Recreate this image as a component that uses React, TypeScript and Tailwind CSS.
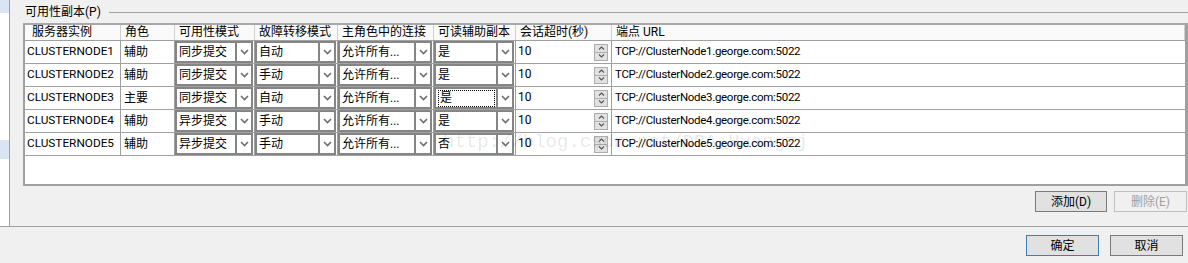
import React from "react";

const CJK = "font-['Roboto','Noto_Sans_CJK_SC',sans-serif]";

const ROWS = [
  { name: "CLUSTERNODE1", role: "辅助", mode: "同步提交", fail: "自动", readable: "是", url: "TCP://ClusterNode1.george.com:5022" },
  { name: "CLUSTERNODE2", role: "辅助", mode: "同步提交", fail: "手动", readable: "是", url: "TCP://ClusterNode2.george.com:5022" },
  { name: "CLUSTERNODE3", role: "主要", mode: "同步提交", fail: "自动", readable: "是", url: "TCP://ClusterNode3.george.com:5022", focus: true },
  { name: "CLUSTERNODE4", role: "辅助", mode: "异步提交", fail: "手动", readable: "是", url: "TCP://ClusterNode4.george.com:5022" },
  { name: "CLUSTERNODE5", role: "辅助", mode: "异步提交", fail: "手动", readable: "否", url: "TCP://ClusterNode5.george.com:5022" },
];

const HEADERS = ["服务器实例", "角色", "可用性模式", "故障转移模式", "主角色中的连接", "可读辅助副本", "会话超时(秒)", "端点 URL"];

const COLS = "grid grid-cols-[96px_54px_80px_83px_96px_82px_96px_1fr]";

function Chevron() {
  return (
    <svg width="9" height="6" viewBox="0 0 9 6">
      <path d="M1 1 L4.5 4.5 L8 1" fill="none" stroke="#6d6d6d" strokeWidth="1.6" />
    </svg>
  );
}

function Combo({ value, focus }: { value: string; focus?: boolean }) {
  return (
    <div className="flex h-full border-2 border-[#858585] bg-white">
      <div className="flex flex-1 items-center pl-[2px] min-w-0">
        <span className={focus ? "border border-dotted border-black pl-px pr-[42px] leading-[15px]" : "leading-[15px]"}>
          {value}
        </span>
      </div>
      <div className="flex w-[16px] items-center justify-center border-l-2 border-[#858585] bg-white">
        <Chevron />
      </div>
    </div>
  );
}

function Spinner() {
  return (
    <div className="flex h-[17px] w-[14px] flex-col border border-[#adadad] bg-[#e1e1e1]">
      <div className="flex flex-1 items-center justify-center border-b border-[#adadad]">
        <svg width="7" height="4" viewBox="0 0 7 4">
          <path d="M1 3.5 L3.5 1 L6 3.5" fill="none" stroke="#555" strokeWidth="1.1" />
        </svg>
      </div>
      <div className="flex flex-1 items-center justify-center">
        <svg width="7" height="4" viewBox="0 0 7 4">
          <path d="M1 0.5 L3.5 3 L6 0.5" fill="none" stroke="#555" strokeWidth="1.1" />
        </svg>
      </div>
    </div>
  );
}

function Btn({ label, disabled, primary, w }: { label: string; disabled?: boolean; primary?: boolean; w: string }) {
  return (
    <div
      className={`flex h-[21px] ${w} items-center justify-center border text-[12px] ${
        disabled
          ? "border-[#bfbfbf] text-[#a0a0a0]"
          : primary
          ? "border-[#3c7fb1] bg-[#e1e1e1] text-black"
          : "border-[#7a7a7a] bg-[#e1e1e1] text-black"
      }`}
    >
      {label}
    </div>
  );
}

export default function App() {
  return (
    <div className={`flex h-[263px] w-[1188px] flex-col bg-[#f0f0f0] text-[12px] text-black ${CJK}`}>
      <div className="flex h-[226px]">
        <div className="flex w-[9px] flex-col bg-white">
          <div className="h-[13px] bg-[#d9e5f3]" />
          <div className="h-[127px]" />
          <div className="h-[19px] bg-[#d9e5f3]" />
        </div>
        <div className="w-px bg-[#a0a0a0]" />
        <div className="relative flex flex-1 flex-col">
          <div className="flex h-[23px] items-start pl-[15px]">
            <span className="mt-[3px] leading-[18px]">可用性副本(P)</span>
            <div className="ml-[8px] mt-[12px] h-px flex-1 bg-[#a0a0a0]" />
          </div>

          <div className="ml-[13px] flex h-[163px] flex-col border-2 border-r-[3px] border-[#a0a0a0] border-t-[#a8a8a8] bg-white">
            <div className={`${COLS} h-[16px] border-b border-[#a0a0a0] bg-[#fafafa]`}>
              {HEADERS.map((h, i) => (
                <div
                  key={h}
                  className={`flex items-center leading-[15px] border-r border-[#d0d0d0] ${i === 0 ? "pl-[7px]" : "pl-[4px]"}`}
                >
                  {h}
                </div>
              ))}
            </div>
            {ROWS.map((r) => (
              <div key={r.name} className={`${COLS} h-[23px] border-b border-[#a0a0a0]`}>
                <div className="flex items-center border-r border-[#a0a0a0] pl-[2px] text-[11.8px]">{r.name}</div>
                <div className="flex items-center border-r border-[#a0a0a0] pl-[3px]">{r.role}</div>
                <div className="border-r border-[#a0a0a0] pr-px">
                  <Combo value={r.mode} />
                </div>
                <div className="border-r border-[#a0a0a0] pr-px">
                  <Combo value={r.fail} />
                </div>
                <div className="border-r border-[#a0a0a0] pr-px">
                  <Combo value="允许所有..." />
                </div>
                <div className="border-r border-[#a0a0a0] pr-px">
                  <Combo value={r.readable} focus={r.focus} />
                </div>
                <div className="flex items-center justify-between border-r border-[#a0a0a0] pl-[2px] pr-[3px]">
                  <span className="mb-[3px]">10</span>
                  <Spinner />
                </div>
                <div className="flex items-center pl-[3px] text-[11.5px] tracking-[-0.3px]">{r.url}</div>
              </div>
            ))}
          </div>

          <div className="mt-[5px] flex justify-end gap-[7px] pr-px">
            <Btn label="添加(D)" w="w-[72px]" />
            <Btn label="删除(E)" w="w-[73px]" disabled />
          </div>

          <div className="pointer-events-none absolute left-[433px] top-[128px] font-['Liberation_Mono',monospace] text-[19px] text-black/10">
            http://blog.csdn.net/DBA_Huangzj
          </div>
        </div>
      </div>
      <div className="h-px bg-[#a0a0a0]" />
      <div className="flex flex-1 items-start justify-end gap-[11px] pr-[5px] pt-[8px]">
        <Btn label="确定" w="w-[73px]" primary />
        <Btn label="取消" w="w-[73px]" />
      </div>
    </div>
  );
}
